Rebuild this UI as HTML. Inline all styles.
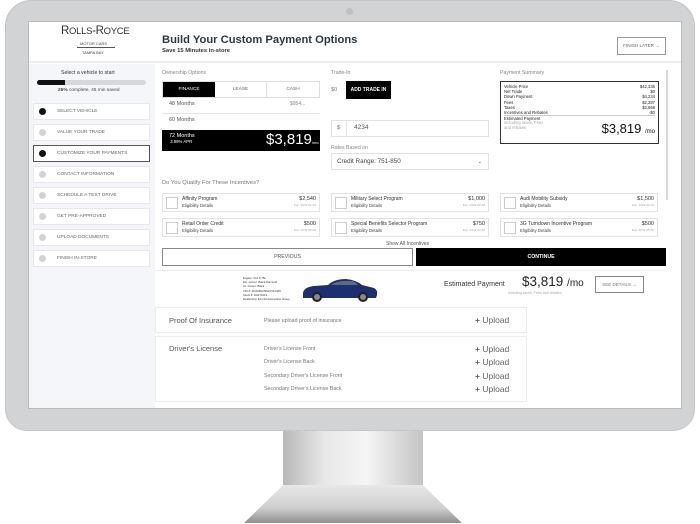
<!DOCTYPE html>
<html><head><meta charset="utf-8">
<style>
*{margin:0;padding:0;box-sizing:border-box}
body{width:700px;height:524px;background:#fff;position:relative;overflow:hidden;font-family:"Liberation Sans",sans-serif;color:#333}
.a{position:absolute}
.t{position:absolute;white-space:nowrap}
.step{position:absolute;left:33px;width:117px;height:17px;background:#fff;border:1px solid #e6e7ea;font-size:4.8px;color:#666;padding-left:23px;line-height:15px}
.step i{position:absolute;left:5px;top:4px;width:7px;height:7px;border-radius:50%;background:#d3d3d3}
.step i.k{background:#111}
.card{position:absolute;width:158px;height:19px;background:#fff;border:1px solid #e3e3e3}
.card .cb{position:absolute;left:3px;top:3px;width:12px;height:12px;border:1px solid #ccc}
.card .n{position:absolute;left:19px;top:3px;font-size:5px;color:#333;line-height:5.5px}
.card .n b{font-weight:normal;color:#444;font-size:4.3px}
.card .p{position:absolute;right:3px;top:3px;font-size:5.5px;text-align:right;line-height:5.5px}
.card .p span{font-size:3px;color:#aaa;display:block}
.up{position:absolute;font-size:8.5px;color:#666}
.lbl{font-size:5.2px;color:#888}
</style></head><body>
<!-- monitor -->
<div class="a" style="left:5px;top:0;width:690px;height:431px;background:#d2d3d4;border-radius:26px 26px 22px 22px;border:1px solid #c6c6c6"></div>
<div class="a" style="left:346px;top:8px;width:7px;height:7px;border-radius:50%;background:#bfc0c1"></div>
<div class="a" style="left:283px;top:431px;width:140px;height:60px;background:linear-gradient(90deg,#b8b8b8,#e8e8e8 30%,#f5f5f5 60%,#c4c4c4)"></div>
<div class="a" style="left:244px;top:485px;width:218px;height:38px;background:linear-gradient(180deg,#e8e8e8,#cfcfcf 60%,#8f8f8f);clip-path:polygon(18% 0,82% 0,100% 100%,0 100%)"></div>
<!-- screen -->
<div class="a" style="left:28px;top:21px;width:654px;height:388px;background:#fff;overflow:hidden;border:1px solid #bbb"></div>
<div class="a" style="left:29px;top:22px;width:652px;height:41px;background:#fff;border-bottom:2px solid #eceef0"></div>
<div class="a" style="left:29px;top:64px;width:126px;height:344px;background:#f5f6f9"></div>
<!-- logo -->
<div class="t" style="left:61px;top:25px;font-size:11.5px;color:#333;letter-spacing:-.3px">R<span style="font-size:9.5px">OLLS</span>-R<span style="font-size:9.5px">OYCE</span></div>
<div class="t" style="left:80px;top:41px;font-size:4px;color:#444">MOTOR CARS</div>
<div class="a" style="left:77px;top:47px;width:38px;height:1px;background:#555"></div>
<div class="t" style="left:82px;top:50px;font-size:4px;color:#444">TAMPA BAY</div>
<div class="t" style="left:162px;top:34px;font-size:11.2px;font-weight:bold;color:#2c3848">Build Your Custom Payment Options</div>
<div class="t" style="left:162px;top:48px;font-size:5.8px;font-weight:bold;color:#333">Save 15 Minutes in-store</div>
<div class="a" style="left:617px;top:37px;width:49px;height:18px;border:1px solid #999;font-size:4.6px;color:#666;text-align:center;line-height:16px">FINISH LATER →</div>
<!-- sidebar -->
<div class="t" style="left:61px;top:70px;font-size:5.2px;color:#333">Select a vehicle to start</div>
<div class="a" style="left:37px;top:80px;width:109px;height:5px;border-radius:3px;background:#d7d8dc"></div>
<div class="a" style="left:37px;top:80px;width:28px;height:5px;border-radius:3px 0 0 3px;background:#111"></div>
<div class="t" style="left:58px;top:88px;font-size:4.8px;color:#444"><b>25%</b> complete, 45 min saved</div>
<div class="step" style="top:103px"><i class="k"></i>SELECT VEHICLE</div>
<div class="step" style="top:124px"><i></i>VALUE YOUR TRADE</div>
<div class="step" style="top:145px;border-color:#555"><i class="k"></i>CUSTOMIZE YOUR PAYMENTS</div>
<div class="step" style="top:166px"><i></i>CONTACT INFORMATION</div>
<div class="step" style="top:187px"><i></i>SCHEDULE A TEST DRIVE</div>
<div class="step" style="top:208px"><i></i>GET PRE-APPROVED</div>
<div class="step" style="top:229px"><i></i>UPLOAD DOCUMENTS</div>
<div class="step" style="top:250px"><i></i>FINISH IN-STORE</div>
<!-- ownership -->
<div class="t lbl" style="left:162px;top:70px">Ownership Options</div>
<div class="a" style="left:162px;top:81px;width:158px;height:17px;border:1px solid #ddd;font-size:4.8px;color:#666">
 <div class="a" style="left:0;top:0;width:52px;height:15px;background:#000;color:#fff;text-align:center;line-height:15px">FINANCE</div>
 <div class="a" style="left:52px;top:0;width:52px;height:15px;border-right:1px solid #ddd;text-align:center;line-height:15px">LEASE</div>
 <div class="a" style="left:104px;top:0;width:52px;height:15px;text-align:center;line-height:15px">CASH</div>
</div>
<div class="t" style="left:169px;top:101px;font-size:5.5px;color:#555">48 Months</div>
<div class="t" style="left:290px;top:101px;font-size:5px;color:#888">$954...</div>
<div class="a" style="left:162px;top:113px;width:158px;height:1px;background:#e5e5e5"></div>
<div class="t" style="left:169px;top:117px;font-size:5.5px;color:#555">60 Months</div>
<div class="a" style="left:162px;top:130px;width:158px;height:21px;background:#000"></div>
<div class="t" style="left:169px;top:133px;font-size:5.5px;color:#fff;line-height:6px">72 Months<br><span style="font-size:4.3px">&nbsp;3.99% APR</span></div>
<div class="t" style="left:266px;top:131px;font-size:15px;color:#fff">$3,819<span style="font-size:4px">/mo</span></div>
<!-- trade in -->
<div class="t lbl" style="left:331px;top:70px">Trade-In</div>
<div class="t" style="left:331px;top:87px;font-size:5.5px;color:#777">$0</div>
<div class="a" style="left:346px;top:81px;width:45px;height:18px;background:#000;color:#fff;font-size:5px;font-weight:bold;text-align:center;line-height:18px">ADD TRADE IN</div>
<div class="a" style="left:331px;top:120px;width:158px;height:17px;border:1px solid #e2e2e2"></div>
<div class="a" style="left:331px;top:120px;width:16px;height:17px;border-right:1px solid #e2e2e2;font-size:5px;color:#666;text-align:center;line-height:17px">$</div>
<div class="t" style="left:354px;top:124px;font-size:6.5px;color:#555">4234</div>
<div class="t lbl" style="left:331px;top:145px">Rates Based on</div>
<div class="a" style="left:331px;top:153px;width:158px;height:17px;border:1px solid #e2e2e2;font-size:6.3px;color:#444;padding-left:5px;line-height:16px">Credit Range: 751-850<span style="position:absolute;right:6px;font-size:5px">⌄</span></div>
<!-- summary -->
<div class="t lbl" style="left:500px;top:70px">Payment Summary</div>
<div class="a" style="left:500px;top:81px;width:159px;height:63px;border:1.5px solid #333;font-size:4.2px;color:#222;padding:2px 3px;line-height:5.2px">
 <div style="display:flex;justify-content:space-between"><span>Vehicle Price</span><span>$42,335</span></div>
 <div style="display:flex;justify-content:space-between"><span>Net Trade</span><span>$0</span></div>
 <div style="display:flex;justify-content:space-between"><span>Down Payment</span><span>$4,234</span></div>
 <div style="display:flex;justify-content:space-between"><span>Fees</span><span>$2,287</span></div>
 <div style="display:flex;justify-content:space-between"><span>Taxes</span><span>$2,668</span></div>
 <div style="display:flex;justify-content:space-between;border-bottom:1px solid #ccc"><span>Incentives and Rebates</span><span>-$0</span></div>
 <div>Estimated Payment</div>
 <div style="color:#aaa;line-height:4.5px">including taxes, Fees<br>and rebates</div>
 <div class="t" style="right:3px;top:44px;font-size:13px;color:#111">$3,819 <span style="font-size:6px">/mo</span></div>
</div>
<div class="a" style="left:666px;top:70px;width:2px;height:130px;background:#d8d8d8"></div>
<!-- incentives -->
<div class="t" style="left:162px;top:180px;font-size:5.8px;color:#777">Do You Qualify For These Incentives?</div>
<div class="card" style="left:162px;top:193px"><div class="cb"></div><div class="n">Affinity Program<br><b>Eligibility Details</b></div><div class="p">$2,540<span>Exp: 2023-01-02</span></div></div>
<div class="card" style="left:331px;top:193px"><div class="cb"></div><div class="n">Military Select Program<br><b>Eligibility Details</b></div><div class="p">$1,000<span>Exp: 2022-02-28</span></div></div>
<div class="card" style="left:500px;top:193px"><div class="cb"></div><div class="n">Audi Mobility Subsidy<br><b>Eligibility Details</b></div><div class="p">$1,500<span>Exp: 2023-01-02</span></div></div>
<div class="card" style="left:162px;top:218px"><div class="cb"></div><div class="n">Retail Order Credit<br><b>Eligibility Details</b></div><div class="p">$500<span>Exp: 2022-05-02</span></div></div>
<div class="card" style="left:331px;top:218px"><div class="cb"></div><div class="n">Special Benefits Selector Program<br><b>Eligibility Details</b></div><div class="p">$750<span>Exp: 2022-02-28</span></div></div>
<div class="card" style="left:500px;top:218px"><div class="cb"></div><div class="n">3G Turndown Incentive Program<br><b>Eligibility Details</b></div><div class="p">$500<span>Exp: 2022-05-02</span></div></div>
<div class="t" style="left:386px;top:241px;font-size:5px;color:#555;height:4px;overflow:hidden;line-height:6px">Show All Incentives</div>
<div class="a" style="left:162px;top:248px;width:251px;height:18px;border:1px solid #888;background:#fff;font-size:5.2px;color:#555;text-align:center;line-height:16px">PREVIOUS</div>
<div class="a" style="left:416px;top:248px;width:250px;height:18px;background:#000;color:#fff;font-size:5.2px;font-weight:bold;text-align:center;line-height:18px">CONTINUE</div>
<!-- vehicle bar -->
<div class="a" style="left:155px;top:270px;width:511px;height:1px;background:#eee"></div>
<div class="t" style="left:243px;top:276px;font-size:2.8px;color:#333;line-height:4.2px">Engine: V12 6.75L<br>Ext. Colour: Black Diamond<br>Int. Colour: Black<br>VIN #: SCA665C50HUX12345<br>Stock #: HA271913<br>Dealership: Emmitt Automotive Group</div>
<svg class="a" style="left:300px;top:277px" width="80" height="27" viewBox="0 0 80 27">
<path d="M3 16 Q4 10 14 9 L28 8 Q34 2 46 2 Q56 3 62 8 L74 11 Q78 13 77 18 L76 21 L3 21 Z" fill="#1d2f6e"/>
<path d="M31 8 Q36 4 45 4 L52 4 Q56 5 58 8 Z" fill="#5a6a8a"/>
<circle cx="17" cy="20" r="5" fill="#222"/><circle cx="17" cy="20" r="3" fill="#888"/>
<circle cx="63" cy="20" r="5" fill="#222"/><circle cx="63" cy="20" r="3" fill="#888"/>
</svg>
<div class="t" style="left:444px;top:281px;font-size:7px;color:#333">Estimated Payment</div>
<div class="t" style="left:522px;top:274px;font-size:13.5px;color:#222">$3,819 <span style="font-size:10px">/mo</span></div>
<div class="t" style="left:508px;top:291px;font-size:3.6px;color:#aaa">including taxes, Fees and rebates</div>
<div class="a" style="left:595px;top:276px;width:49px;height:17px;border:1px solid #888;font-size:4.5px;color:#777;text-align:center;line-height:15px">SEE DETAILS →</div>
<!-- documents -->
<div class="a" style="left:155px;top:307px;width:372px;height:26px;border:1px solid #ececec;background:#fff"></div>
<div class="t" style="left:169px;top:316px;font-size:7.5px;color:#555">Proof Of Insurance</div>
<div class="t" style="left:264px;top:318px;font-size:5.3px;color:#777">Please upload proof of insurance</div>
<div class="up" style="left:475px;top:315px"><b>+</b> Upload</div>
<div class="a" style="left:155px;top:336px;width:372px;height:66px;border:1px solid #ececec;background:#fff"></div>
<div class="t" style="left:169px;top:344px;font-size:7.5px;color:#555">Driver's License</div>
<div class="t" style="left:264px;top:346px;font-size:5.3px;color:#777">Driver's License Front</div>
<div class="t" style="left:264px;top:359px;font-size:5.3px;color:#777">Driver's License Back</div>
<div class="t" style="left:264px;top:373px;font-size:5.3px;color:#777">Secondary Driver's License Front</div>
<div class="t" style="left:264px;top:386px;font-size:5.3px;color:#777">Secondary Driver's License Back</div>
<div class="up" style="left:475px;top:344px"><b>+</b> Upload</div>
<div class="up" style="left:475px;top:357px"><b>+</b> Upload</div>
<div class="up" style="left:475px;top:371px"><b>+</b> Upload</div>
<div class="up" style="left:475px;top:384px"><b>+</b> Upload</div>
</body></html>
